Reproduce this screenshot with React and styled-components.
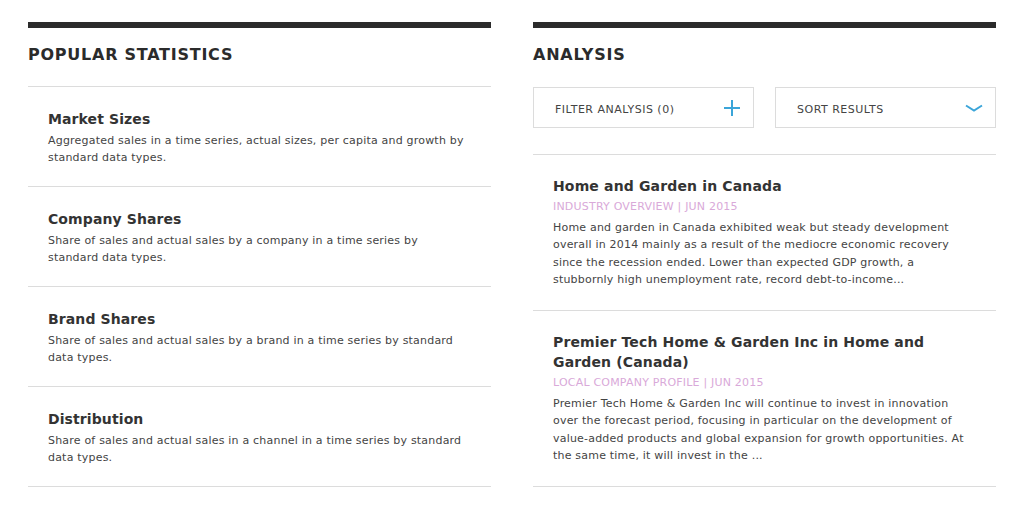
import React from "react";
import styled, { createGlobalStyle } from "styled-components";

const Global = createGlobalStyle`
  html, body { margin: 0; padding: 0; background: #fff; }
  body { font-family: "DejaVu Sans", Verdana, sans-serif; color: #333; }
`;

const Page = styled.div`
  display: grid;
  grid-template-columns: 463px 463px;
  column-gap: 42px;
  padding: 22px 28px 0 28px;
`;

const Column = styled.section`
  display: flex;
  flex-direction: column;
  border-top: 6px solid #2b2b2b;
`;

const Heading = styled.h2`
  margin: 0;
  box-sizing: border-box;
  height: 59px;
  padding-top: 17px;
  font-size: 16px;
  line-height: 20px;
  font-weight: bold;
  color: #2b2b2b;
  letter-spacing: 0.75px;
  border-bottom: 1px solid ${(p) => (p.$divider ? "#dcdcdc" : "transparent")};
`;

const StatItem = styled.div`
  height: 100px;
  box-sizing: border-box;
  padding: 23px 26px 0 20px;
  border-bottom: 1px solid #dcdcdc;
`;

const ItemTitle = styled.h3`
  margin: 0;
  font-size: 14px;
  line-height: 18px;
  font-weight: bold;
  color: #333;
  letter-spacing: 0.1px;
`;

const Desc = styled.p`
  margin: 4px 0 0 0;
  font-size: 11px;
  line-height: 17px;
  color: #444;
  letter-spacing: 0.2px;
`;

const Controls = styled.div`
  display: grid;
  grid-template-columns: 1fr 1fr;
  column-gap: 21px;
  padding-bottom: 26px;
  border-bottom: 1px solid #dcdcdc;
`;

const Control = styled.button`
  display: flex;
  align-items: center;
  justify-content: space-between;
  height: 41px;
  box-sizing: border-box;
  padding: 4px 12px 0 21px;
  border: 1px solid #dcdcdc;
  background: #fff;
  font-family: "DejaVu Sans", Verdana, sans-serif;
  font-size: 11px;
  color: #444;
  letter-spacing: 0.5px;
  text-align: left;
  cursor: pointer;
`;

const IconSlot = styled.span`
  display: flex;
  align-items: center;
  margin-top: -4px;
`;

const Article = styled.article`
  box-sizing: border-box;
  padding: 21px 25px 21.5px 20px;
  border-bottom: 1px solid #dcdcdc;
`;

const ArticleTitle = styled.h3`
  margin: 0;
  font-size: 14px;
  line-height: 20px;
  font-weight: bold;
  color: #333;
  letter-spacing: 0.15px;
`;

const Meta = styled.div`
  margin-top: 1.5px;
  font-size: 11px;
  line-height: 17px;
  color: #d9a9d9;
  letter-spacing: 0.2px;
  text-transform: uppercase;
`;

const Body = styled.p`
  margin: 4px 0 0 0;
  font-size: 11px;
  line-height: 17.5px;
  color: #444;
  letter-spacing: 0.2px;
`;

const Plus = () => (
  <svg width="18" height="18" viewBox="0 0 18 18">
    <path d="M9 1v16M1 9h16" stroke="#3ba5d9" strokeWidth="2" fill="none" />
  </svg>
);

const Chevron = () => (
  <svg width="18" height="8" viewBox="0 0 18 8">
    <path d="M1 1.5l8 5 8-5" stroke="#3ba5d9" strokeWidth="2" fill="none" />
  </svg>
);

const stats = [
  {
    title: "Market Sizes",
    desc: "Aggregated sales in a time series, actual sizes, per capita and growth by standard data types.",
  },
  {
    title: "Company Shares",
    desc: "Share of sales and actual sales by a company in a time series by standard data types.",
  },
  {
    title: "Brand Shares",
    desc: "Share of sales and actual sales by a brand in a time series by standard data types.",
  },
  {
    title: "Distribution",
    desc: "Share of sales and actual sales in a channel in a time series by standard data types.",
  },
];

const articles = [
  {
    title: "Home and Garden in Canada",
    meta: "Industry Overview | Jun 2015",
    body: "Home and garden in Canada exhibited weak but steady development overall in 2014 mainly as a result of the mediocre economic recovery since the recession ended. Lower than expected GDP growth, a stubbornly high unemployment rate, record debt-to-income...",
  },
  {
    title: "Premier Tech Home & Garden Inc in Home and Garden (Canada)",
    meta: "Local Company Profile | Jun 2015",
    body: "Premier Tech Home & Garden Inc will continue to invest in innovation over the forecast period, focusing in particular on the development of value-added products and global expansion for growth opportunities. At the same time, it will invest in the ...",
  },
];

export default function App() {
  return (
    <>
      <Global />
      <Page>
        <Column>
          <Heading $divider>POPULAR STATISTICS</Heading>
          {stats.map((s) => (
            <StatItem key={s.title}>
              <ItemTitle>{s.title}</ItemTitle>
              <Desc>{s.desc}</Desc>
            </StatItem>
          ))}
        </Column>
        <Column>
          <Heading>ANALYSIS</Heading>
          <Controls>
            <Control>
              <span>FILTER ANALYSIS (0)</span>
              <IconSlot>
                <Plus />
              </IconSlot>
            </Control>
            <Control>
              <span>SORT RESULTS</span>
              <IconSlot>
                <Chevron />
              </IconSlot>
            </Control>
          </Controls>
          {articles.map((a) => (
            <Article key={a.title}>
              <ArticleTitle>{a.title}</ArticleTitle>
              <Meta>{a.meta}</Meta>
              <Body>{a.body}</Body>
            </Article>
          ))}
        </Column>
      </Page>
    </>
  );
}
